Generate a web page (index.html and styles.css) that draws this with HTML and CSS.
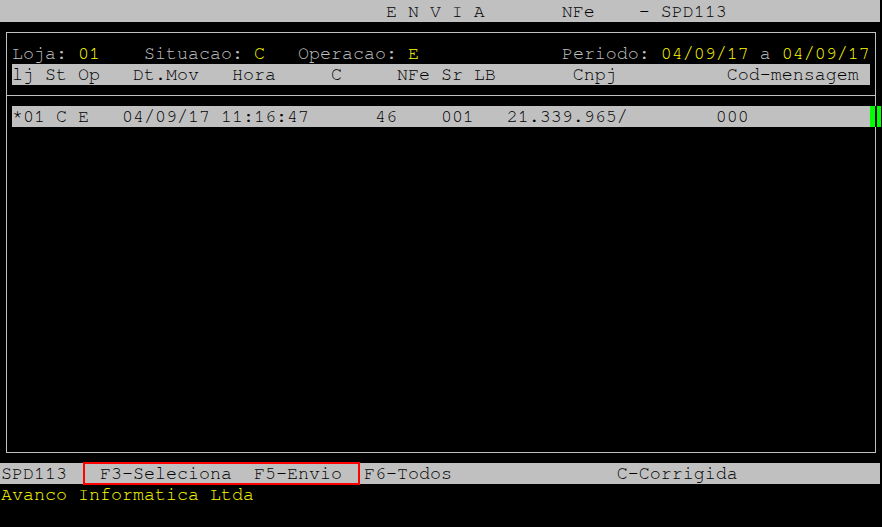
FILE: index.html
```html
<!DOCTYPE html>
<html>
<head>
<meta charset="utf-8">
<title>SPD113</title>
<link rel="stylesheet" href="styles.css">
</head>
<body>
<div class="screen">
  <div class="row title">                                   E N V I A       NFe    - SPD113</div>
  <div class="frame">
    <div class="row">Loja: <span class="val">01</span>    Situacao: <span class="val">C</span>   Operacao: <span class="val">E</span>             Periodo: <span class="val">04/09/17</span> a <span class="val">04/09/17</span></div>
    <div class="row hdr">lj St Op   Dt.Mov   Hora     C     NFe Sr LB       Cnpj          Cod-mensagem</div>
    <div class="sep"></div>
    <div class="list">
      <div class="row sel"><span class="selbar">*01 C E   04/09/17 11:16:47      46    001   21.339.965/        000</span><span class="cursor"></span></div>
    </div>
  </div>
  <div class="row status">SPD113   F3-Seleciona  F5-Envio  F6-Todos               C-Corrigida<span class="mark"></span></div>
  <div class="row company">Avanco Informatica Ltda</div>
</div>
</body>
</html>
```

FILE: styles.css
```css
html, body {
  margin: 0;
  background: #000;
}
body {
  width: 882px;
  height: 527px;
  overflow: hidden;
}
.screen {
  width: 880px;
  font-family: "Nimbus Mono PS", "Nimbus Mono L", "FreeMono", "Courier 10 Pitch", "Liberation Mono", monospace;
  font-size: 18.333px;
  line-height: 21px;
  color: #c0c0c0;
}
.row {
  height: 21px;
  white-space: pre;
}
.title {
  height: 22px;
  box-sizing: border-box;
  padding: 1px 0 0 1px;
  background: #c0c0c0;
  color: #000;
}
.frame {
  box-sizing: border-box;
  width: 870px;
  margin: 10px 0 0 6px;
  border: 1px solid #c0c0c0;
  padding: 10px 0 10px 5px;
}
.val {
  color: #ffff00;
}
.hdr {
  width: 858px;
  background: #c0c0c0;
  color: #000;
}
.sep {
  height: 1px;
  background: #c0c0c0;
  margin: 10px 0 10px -5px;
}
.list {
  height: 336px;
}
.sel {
  display: flex;
}
.selbar {
  flex: none;
  width: 858px;
  background: #c0c0c0;
  color: #000;
}
.cursor {
  flex: none;
  width: 11px;
  background: linear-gradient(to right, #00ff00 0 5px, #000 5px 7px, #00ff00 7px);
}
.status {
  position: relative;
  margin-top: 10px;
  padding-left: 1px;
  background: #c0c0c0;
  color: #000;
}
.mark {
  position: absolute;
  left: 83px;
  top: -1px;
  width: 277px;
  height: 23px;
  box-sizing: border-box;
  border: 2px solid #ff0000;
}
.company {
  padding-left: 1px;
  color: #ffff00;
}
```
